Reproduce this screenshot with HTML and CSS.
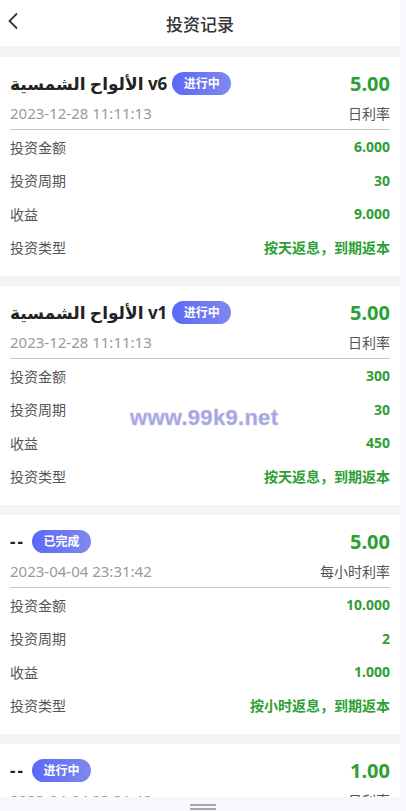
FILE: index.html
```html
<!DOCTYPE html>
<html lang="zh">

<head>
	<meta charset="utf-8" />
	<title>投资记录</title>
	<meta name="viewport" content="width=device-width, initial-scale=1.0">
	<link rel="stylesheet" href="styles.css">
</head>

<body>
	<div class="page">
		<div class="header">
			<span class="back">
				<svg width="12" height="18" viewBox="0 0 12 18"><path d="M10 1.5 L2.5 9 L10 16.5" fill="none" stroke="#333" stroke-width="1.8"/></svg>
			</span>
			<div class="title">投资记录</div>
		</div>

		<div class="list">
			<div class="card">
				<div class="top">
					<div class="name"><span dir="ltr">الألواح الشمسية v6</span> <span class="badge">进行中</span></div>
					<div class="rate">5.00</div>
				</div>
				<div class="sub">
					<div class="date">2023-12-28 11:11:13</div>
					<div class="rate-label">日利率</div>
				</div>
				<div class="row"><span>投资金额</span><b>6.000</b></div>
				<div class="row"><span>投资周期</span><b>30</b></div>
				<div class="row"><span>收益</span><b>9.000</b></div>
				<div class="row"><span>投资类型</span><b>按天返息，到期返本</b></div>
			</div>

			<div class="card">
				<div class="top">
					<div class="name"><span dir="ltr">الألواح الشمسية v1</span> <span class="badge">进行中</span></div>
					<div class="rate">5.00</div>
				</div>
				<div class="sub">
					<div class="date">2023-12-28 11:11:13</div>
					<div class="rate-label">日利率</div>
				</div>
				<div class="row"><span>投资金额</span><b>300</b></div>
				<div class="row"><span>投资周期</span><b>30</b></div>
				<div class="row"><span>收益</span><b>450</b></div>
				<div class="row"><span>投资类型</span><b>按天返息，到期返本</b></div>
			</div>

			<div class="card">
				<div class="top">
					<div class="name"><span class="dash">--</span> <span class="badge">已完成</span></div>
					<div class="rate">5.00</div>
				</div>
				<div class="sub">
					<div class="date">2023-04-04 23:31:42</div>
					<div class="rate-label">每小时利率</div>
				</div>
				<div class="row"><span>投资金额</span><b>10.000</b></div>
				<div class="row"><span>投资周期</span><b>2</b></div>
				<div class="row"><span>收益</span><b>1.000</b></div>
				<div class="row"><span>投资类型</span><b>按小时返息，到期返本</b></div>
			</div>

			<div class="card">
				<div class="top">
					<div class="name"><span class="dash">--</span> <span class="badge">进行中</span></div>
					<div class="rate">1.00</div>
				</div>
				<div class="sub">
					<div class="date">2023-04-04 23:31:42</div>
					<div class="rate-label">日利率</div>
				</div>
				<div class="row"><span>投资金额</span><b>10.000</b></div>
			</div>
		</div>

		<div class="watermark">www.99k9.net</div>
	</div>

	<div class="home-bar"><i></i><i></i></div>
</body>

</html>
```

FILE: styles.css
```css
body {
	margin: 0;
	background: #f7f8fc;
	font-family: "Noto Sans", "Noto Sans CJK SC", "DejaVu Sans", sans-serif;
	color: #333;
}

.page {
	width: 400px;
	background: #f4f4f4;
	position: relative;
	height: 811px;
	overflow: hidden;
}

.header {
	height: 46px;
	background: #fff;
	display: flex;
	align-items: center;
	justify-content: center;
	position: relative;
}

.back {
	position: absolute;
	left: 7px;
	top: 12px;
}

.title {
	font-size: 17px;
	color: #333;
	font-weight: 500;
}

.list {
	padding-top: 11px;
	display: flex;
	flex-direction: column;
	gap: 10px;
}

.card {
	background: #fff;
	padding: 13px 10px 12px;
}

.top {
	display: flex;
	justify-content: space-between;
	align-items: center;
	height: 26px;
}

.name {
	font-size: 17px;
	font-weight: bold;
	color: #222;
	display: flex;
	align-items: center;
	gap: 5px;
}

.name .dash {
	letter-spacing: 2px;
	margin-right: 2px;
}

.badge {
	display: inline-block;
	width: 59px;
	height: 23px;
	line-height: 23px;
	border-radius: 12px;
	background: linear-gradient(90deg, #5a68f6, #8088ee);
	color: #fff;
	font-size: 12px;
	font-weight: bold;
	text-align: center;
}

.rate {
	font-size: 20px;
	font-weight: bold;
	color: #2f9f35;
}

.sub {
	display: flex;
	justify-content: space-between;
	align-items: center;
	height: 33px;
	border-bottom: 1px solid #c8c8c8;
}

.date {
	font-size: 15px;
	color: #9a9a9a;
}

.rate-label {
	font-size: 14px;
	color: #555;
}

.row {
	display: flex;
	justify-content: space-between;
	align-items: center;
	height: 33.5px;
	font-size: 14px;
}

.row span {
	color: #555;
}

.row b {
	color: #2f9f35;
}

.watermark {
	position: absolute;
	left: 130px;
	top: 405px;
	font-family: "Liberation Sans", Arial, sans-serif;
	font-size: 22px;
	letter-spacing: 0.3px;
	font-weight: bold;
	color: #a3a3e0;
	-webkit-text-stroke: 0.6px #c4c4ee;
}

.home-bar {
	position: fixed;
	left: 0;
	right: 0;
	bottom: 0;
	height: 14px;
	background: #f7f8fc;
	display: flex;
	flex-direction: column;
	align-items: center;
	padding-top: 7px;
	gap: 2px;
	box-sizing: border-box;
}

.home-bar i {
	display: block;
	width: 26px;
	height: 2px;
	background: #a8a8a8;
}
```
